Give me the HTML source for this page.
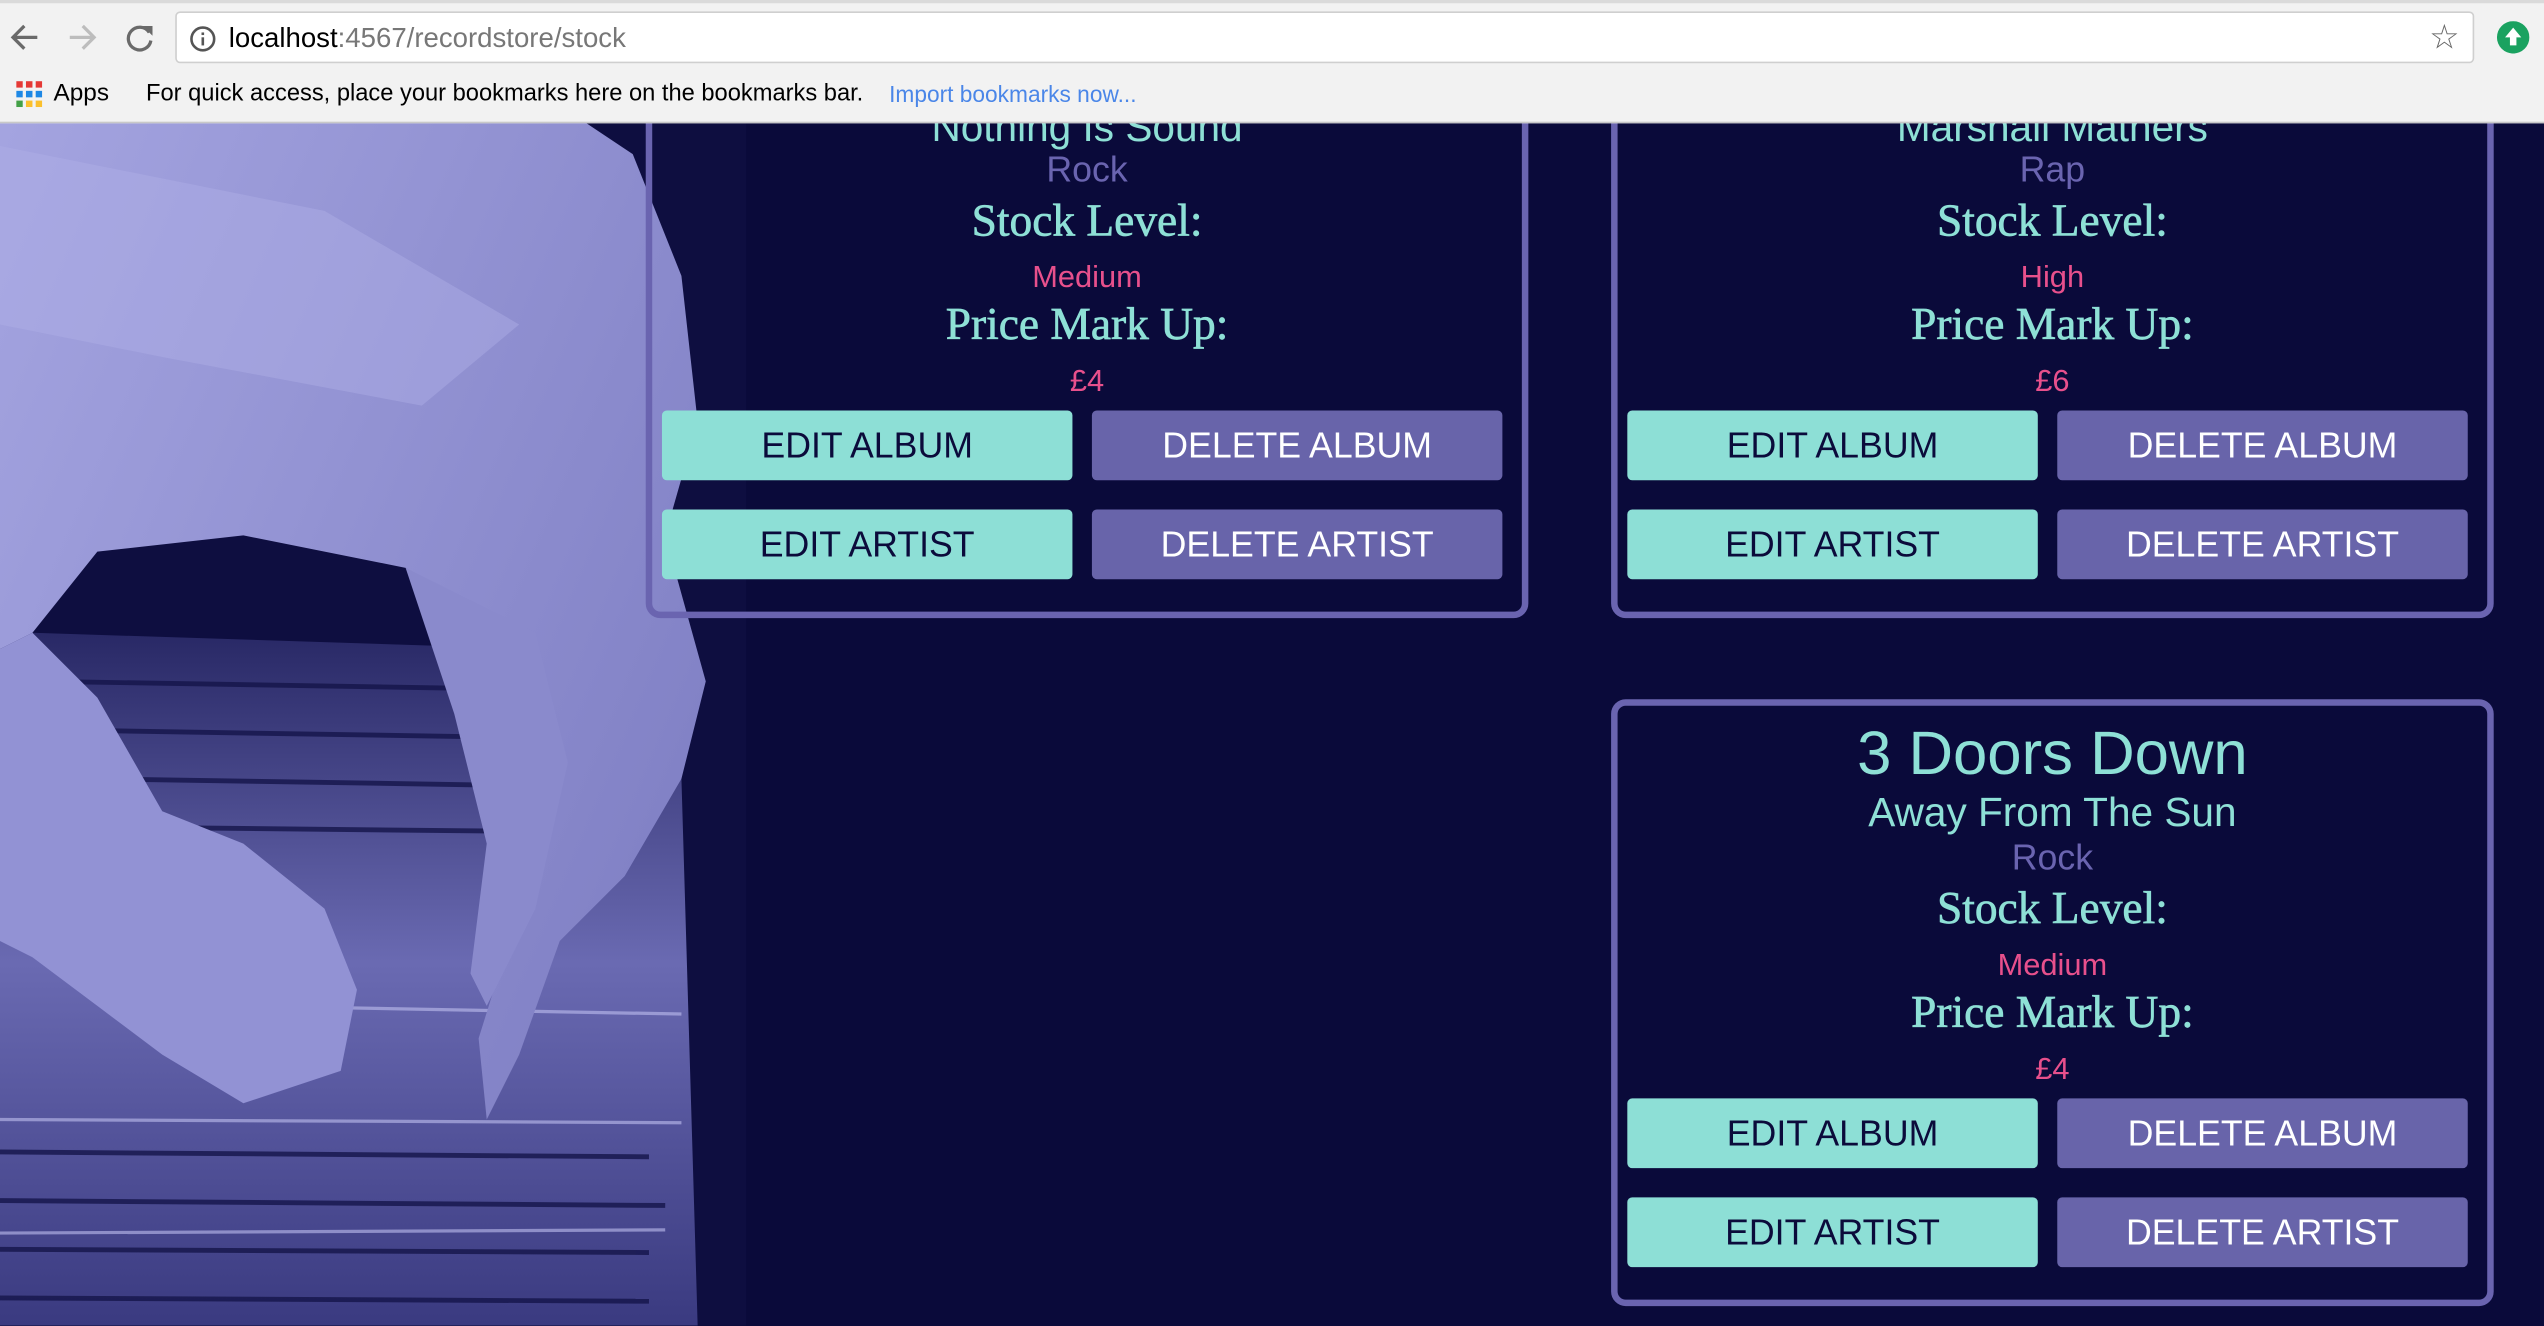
<!DOCTYPE html>
<html><head><meta charset="utf-8"><style>
html,body{margin:0;padding:0;width:2544px;height:1326px;overflow:hidden;background:#0a0a3a}
#w{position:absolute;left:0;top:0;width:1568px;height:817px;transform:scale(1.62245);transform-origin:0 0;font-family:"Liberation Sans",sans-serif;overflow:hidden;background:#0a0a3a}
.chrome{position:absolute;left:0;top:0;width:1568px;height:75px;background:#f2f2f2;border-bottom:1px solid #c8c8c8;z-index:5}
.url{position:absolute;left:108px;top:7px;width:1417px;height:32px;background:#fff;border:1px solid #cfcfcf;border-radius:3px;box-sizing:border-box}
.card{position:absolute;width:544px;border:4px solid #6a64b0;border-radius:9px;box-sizing:border-box;text-align:center}
.t{position:absolute;left:0;right:0;white-space:nowrap}
.btn{position:absolute;width:253px;height:43px;border-radius:3px;font-size:22px;line-height:43px;text-align:center}
.e{background:#8ddfd6;color:#0b0b3b}.d{background:#6864aa;color:#fff}
.serif{font-family:"Liberation Serif",serif;color:#8ee0d6;font-size:28px;-webkit-text-stroke:0.4px #8ee0d6}
.pink{color:#e8508c;font-size:19px}
.rock{color:#6a64b0;font-size:22px}
</style></head><body><div id="w">
<div class="chrome">
 <div style="position:absolute;left:0;top:0;width:1568px;height:2px;background:#dadada"></div>
 <svg style="position:absolute;left:6px;top:12px" width="90" height="22" viewBox="0 0 90 22"><path d="M17 11H3M9 4L2 11l7 7" stroke="#6a6a6a" stroke-width="2" fill="none"/><path d="M37 11h14M45 4l7 7-7 7" stroke="#bdbdbd" stroke-width="2" fill="none"/><path d="M86 8a7 7 0 1 0 1 5" stroke="#6a6a6a" stroke-width="2" fill="none"/><path d="M82 4h6v6z" fill="#6a6a6a"/></svg>
 <div class="url">
  <svg style="position:absolute;left:8px;top:8px" width="16" height="16"><circle cx="8" cy="8" r="7" stroke="#555" stroke-width="1.6" fill="none"/><rect x="7.2" y="7" width="1.6" height="5" fill="#555"/><rect x="7.2" y="4" width="1.6" height="1.6" fill="#555"/></svg>
  <span style="position:absolute;left:32px;top:6px;font-size:17px;color:#000">localhost<span style="color:#777">:4567/recordstore/stock</span></span>
  <span style="position:absolute;right:8px;top:3px;font-size:21px;color:#666">☆</span>
 </div>
 <svg style="position:absolute;left:1539px;top:13px" width="20" height="20"><circle cx="10" cy="10" r="10" fill="#1aa260"/><path d="M10 4l5 6h-3v5H8v-5H5z" fill="#fff"/></svg>
 <svg style="position:absolute;left:10px;top:50px" width="16" height="16"><g fill="#e53935"><rect x="0" y="0" width="4" height="4"/><rect x="6" y="0" width="4" height="4"/><rect x="12" y="0" width="4" height="4"/></g><g fill="#1e88e5"><rect x="0" y="6" width="4" height="4"/><rect x="6" y="6" width="4" height="4"/><rect x="12" y="6" width="4" height="4"/></g><g fill="#43a047"><rect x="0" y="12" width="4" height="4"/></g><g fill="#fbc02d"><rect x="6" y="12" width="4" height="4"/><rect x="12" y="12" width="4" height="4"/></g></svg>
 <span style="position:absolute;left:33px;top:49px;font-size:15px;color:#000">Apps</span>
 <span style="position:absolute;left:90px;top:50px;font-size:14.6px;color:#000">For quick access, place your bookmarks here on the bookmarks bar.</span>
 <span style="position:absolute;left:548px;top:50px;font-size:14px;color:#4a86e8">Import bookmarks now...</span>
</div>

<svg style="position:absolute;left:0;top:75px" width="460" height="742" viewBox="0 75 460 742">
 <defs><linearGradient id="g" x1="0" y1="0" x2="1" y2="0.6"><stop offset="0" stop-color="#a4a4e0"/><stop offset="1" stop-color="#8282c6"/></linearGradient>
 <linearGradient id="r" x1="0" y1="0" x2="0" y2="1"><stop offset="0" stop-color="#22225e"/><stop offset="0.5" stop-color="#6a6ab2"/><stop offset="1" stop-color="#3a3a80"/></linearGradient></defs>
 <rect x="0" y="75" width="460" height="742" fill="#0e0e40"/>
 <polygon points="0,370 20,390 330,400 420,480 430,817 0,817" fill="url(#r)"/>
 <g stroke="#15154a" stroke-width="3" opacity=".8">
  <line x1="30" y1="420" x2="330" y2="425"/><line x1="40" y1="450" x2="350" y2="455"/><line x1="60" y1="480" x2="370" y2="485"/><line x1="90" y1="510" x2="380" y2="513"/><line x1="0" y1="710" x2="400" y2="713"/><line x1="0" y1="740" x2="410" y2="743"/><line x1="0" y1="770" x2="400" y2="772"/><line x1="0" y1="800" x2="400" y2="802"/></g>
 <g stroke="#c0c0f0" stroke-width="2" opacity=".6"><line x1="0" y1="690" x2="420" y2="692"/><line x1="150" y1="620" x2="420" y2="625"/><line x1="0" y1="760" x2="410" y2="758"/></g>
 <path d="M0 75H360L390 95 420 170 430 260 410 330 435 420 420 480 385 540 345 580 320 650 300 690 295 640 320 560 340 470 330 400 250 350 150 330 60 340 20 390 0 400Z" fill="url(#g)"/>
 <path d="M0 400 20 390 60 430 100 500 150 520 200 560 220 610 210 660 150 680 100 650 60 620 20 590 0 580Z" fill="#9292d4"/>
 <path d="M250 350 330 390 350 470 330 560 300 620 290 600 300 520 280 440Z" fill="#8a8acc"/>
 <path d="M0 90 200 130 320 200 260 250 100 220 0 200Z" fill="#b0b0e6" opacity=".45"/>
</svg>

<!-- card 1 -->
<div class="card" style="left:398px;top:7px;height:374px">
 <div class="t" style="top:54px;font-size:25px;color:#8ee0d6">Nothing Is Sound</div>
 <div class="t rock" style="top:81px">Rock</div>
 <div class="t serif" style="top:110px">Stock Level:</div>
 <div class="t pink" style="top:150px">Medium</div>
 <div class="t serif" style="top:174px">Price Mark Up:</div>
 <div class="t pink" style="top:214px">£4</div>
 <div class="btn e" style="left:6px;top:242px">EDIT ALBUM</div>
 <div class="btn d" style="left:271px;top:242px">DELETE ALBUM</div>
 <div class="btn e" style="left:6px;top:303px">EDIT ARTIST</div>
 <div class="btn d" style="left:271px;top:303px">DELETE ARTIST</div>
</div>
<!-- card 2 -->
<div class="card" style="left:993px;top:7px;height:374px">
 <div class="t" style="top:54px;font-size:25px;color:#8ee0d6">Marshall Mathers</div>
 <div class="t rock" style="top:81px">Rap</div>
 <div class="t serif" style="top:110px">Stock Level:</div>
 <div class="t pink" style="top:150px">High</div>
 <div class="t serif" style="top:174px">Price Mark Up:</div>
 <div class="t pink" style="top:214px">£6</div>
 <div class="btn e" style="left:6px;top:242px">EDIT ALBUM</div>
 <div class="btn d" style="left:271px;top:242px">DELETE ALBUM</div>
 <div class="btn e" style="left:6px;top:303px">EDIT ARTIST</div>
 <div class="btn d" style="left:271px;top:303px">DELETE ARTIST</div>
</div>
<!-- card 3 -->
<div class="card" style="left:993px;top:431px;height:374px">
 <div class="t" style="top:9px;font-size:38px;color:#8ee0d6">3 Doors Down</div>
 <div class="t" style="top:52px;font-size:25px;color:#8ee0d6">Away From The Sun</div>
 <div class="t rock" style="top:81px">Rock</div>
 <div class="t serif" style="top:110px">Stock Level:</div>
 <div class="t pink" style="top:150px">Medium</div>
 <div class="t serif" style="top:174px">Price Mark Up:</div>
 <div class="t pink" style="top:214px">£4</div>
 <div class="btn e" style="left:6px;top:242px">EDIT ALBUM</div>
 <div class="btn d" style="left:271px;top:242px">DELETE ALBUM</div>
 <div class="btn e" style="left:6px;top:303px">EDIT ARTIST</div>
 <div class="btn d" style="left:271px;top:303px">DELETE ARTIST</div>
</div>
</div></body></html>
